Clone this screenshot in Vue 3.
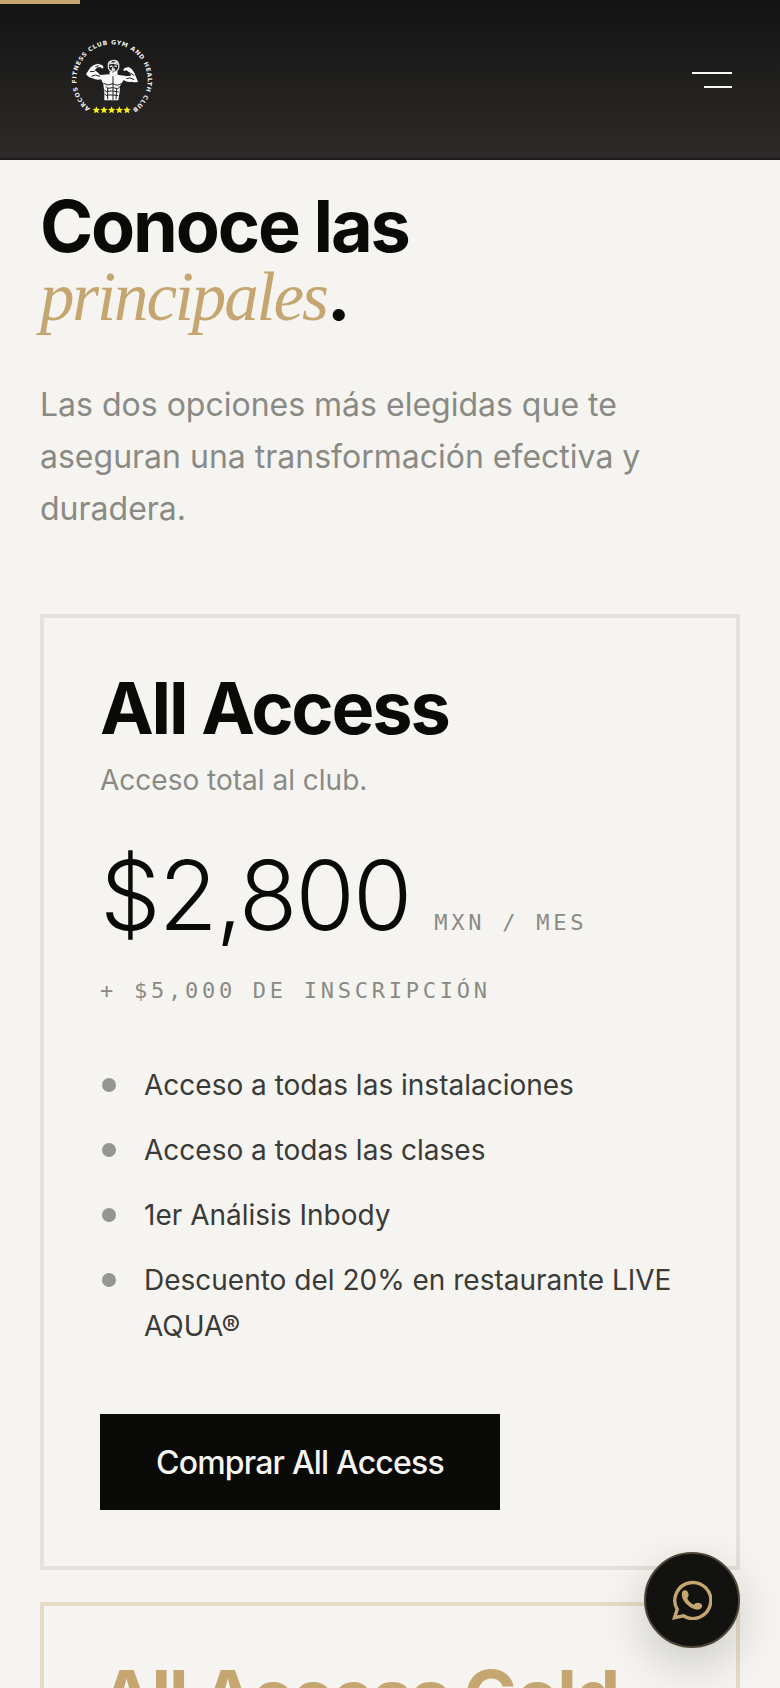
<script setup>
import { ref } from 'vue'

const menuOpen = ref(false)
const progress = ref(10.2)

const plans = [
	{
		id: 'all-access',
		name: 'All Access',
		tagline: 'Acceso total al club.',
		price: '$2,800',
		period: 'MXN / MES',
		signup: '+ $5,000 DE INSCRIPCIÓN',
		features: [
			'Acceso a todas las instalaciones',
			'Acceso a todas las clases',
			'1er Análisis Inbody',
			'Descuento del 20% en restaurante LIVE AQUA®'
		],
		cta: 'Comprar All Access'
	},
	{
		id: 'all-access-gold',
		name: 'All Access Gold',
		gold: true
	}
]
</script>

<template>
	<div class="page">
		<div class="progress" :style="{ width: progress + '%' }"></div>

		<header class="header">
			<a class="logo" href="#" aria-label="Arcos Fitness Club">
				<svg viewBox="0 0 240 240">
					<defs>
						<path id="ring" d="M55 205 A107 107 0 1 1 178 210" />
					</defs>
					<text class="ring-text"><textPath href="#ring">ARCOS FITNESS CLUB GYM AND HEALTH CLUB</textPath></text>

					<!-- Arms -->
					<path class="body" d="M42 102 L56 82 Q64 73 78 71 L91 76 Q97 82 92 86 L86 82 L76 82 L68 91 Q76 95 84 104 L94 106 L91 117 Q74 122 62 115 Q48 112 42 102 Z" />
					<path class="body" d="M198 125 L187 98 Q182 86 170 81 L158 84 Q152 89 155 93 L163 91 L174 98 L178 107 L166 108 L151 111 L154 120 Q168 129 179 125 Q190 129 198 125 Z" />
					<path class="line" d="M54 95 L68 94 M58 109 Q70 101 84 109 M70 80 L80 77 M176 99 L187 107 M163 116 Q174 110 187 119" />

					<!-- Head and neck -->
					<path class="sketch" d="M109 75 Q108 63 121 62 Q137 59 140 73 Q142 88 133 94 Q123 100 113 91 Q107 85 109 75 Z M110 72 Q121 67 138 73 M113 80 L121 78 M127 78 L135 79 M123 80 L121 87 L128 87 M119 91 L130 90 M114 68 L119 64 M127 69 L136 66" />
					<path class="body" d="M114 93 L122 98 L136 93 L137 104 L120 110 L112 103 Z" />

					<!-- Torso -->
					<path class="body" d="M86 105 L110 103 L123 109 L136 104 L163 108 L153 123 L144 139 L143 155 L139 181 L97 181 L97 157 L94 133 L87 117 Z" />
					<path class="line" d="M123 109 V180 M94 130 Q109 139 123 131 Q136 140 149 130 M101 139 L108 145 L122 143 L137 146 L145 139 M104 154 L122 153 L140 156 M105 165 L122 165 L139 167 M107 144 L107 178 M134 147 L132 178 M97 150 L106 157 M98 162 L106 168" />

					<!-- Stars -->
					<path v-for="n in 5" :key="n" class="star" :transform="`translate(${50 + n * 23} 210)`" d="M0 -11 L3 -4 L11 -3 L5 2 L7 10 L0 6 L-7 10 L-5 2 L-11 -3 L-3 -4 Z" />
				</svg>
			</a>

			<button class="burger" type="button" aria-label="Menú" :aria-expanded="menuOpen" @click="menuOpen = !menuOpen">
				<span></span>
				<span></span>
			</button>
		</header>

		<main class="content">
			<h1>Conoce las<br><em>principales</em>.</h1>
			<p class="intro">Las dos opciones más elegidas que te aseguran una transformación efectiva y duradera.</p>

			<div class="plans">
				<section v-for="plan in plans" :key="plan.id" class="card" :class="{ gold: plan.gold }">
					<h2>{{ plan.name }}</h2>
					<template v-if="plan.price">
						<p class="tagline">{{ plan.tagline }}</p>
						<div class="price">
							<span class="amount">{{ plan.price }}</span>
							<span class="mono">{{ plan.period }}</span>
						</div>
						<p class="mono signup">{{ plan.signup }}</p>
						<ul>
							<li v-for="feature in plan.features" :key="feature">
								<span class="dot"></span>
								<span>{{ feature }}</span>
							</li>
						</ul>
						<button class="buy" type="button">{{ plan.cta }}</button>
					</template>
				</section>
			</div>
		</main>

		<a class="whatsapp" href="#" aria-label="WhatsApp">
			<svg viewBox="0 0 40 40">
				<path class="bubble" d="M2.5 37.7 L5.2 29.4 A18 18 0 1 1 11.4 35.8 Z" />
				<path class="phone" d="M10 12.4 Q10.8 9.4 14 10.4 Q16.4 11.3 16.6 15 Q16.6 17 15.2 18.2 Q17 22.3 21.8 24.8 Q23.2 22.8 25.4 22.7 Q29.4 22.8 30.2 25.1 Q30.3 28.8 26.6 29.6 Q21.6 30.3 16 25.6 Q10 20.2 9.8 15 Z" />
			</svg>
		</a>
	</div>
</template>

<style>
body {
	background-color: #f5f4f0;
}
</style>

<style scoped>
.page {
	height: 100vh;
	overflow: hidden;
	background-color: #f5f4f0;
	color: #0a0a09;
	font-family: Inter, "Liberation Sans", sans-serif;
}

.progress {
	position: fixed;
	top: 0;
	left: 0;
	height: 4px;
	background-color: #c5a670;
	z-index: 3;
}

.header {
	box-sizing: border-box;
	height: 160px;
	padding: 0 48px 0 72px;
	display: flex;
	align-items: center;
	justify-content: space-between;
	background: linear-gradient(#131313, #2d2b29);
	box-shadow: inset 0 -2px #1b1919;
}

.logo,
.logo svg {
	display: block;
	width: 80px;
	height: 80px;
	overflow: visible;
}

.ring-text {
	font-family: "DejaVu Sans", sans-serif;
	font-size: 18px;
	font-weight: bold;
	letter-spacing: 2px;
	fill: #f0f0f0;
}

.body {
	fill: #fafafa;
}

.line {
	fill: none;
	stroke: #222;
	stroke-width: 3;
}

.sketch {
	fill: none;
	stroke: #dedede;
	stroke-width: 4;
}

.star {
	fill: #fbf51a;
}

.burger {
	width: 40px;
	padding: 0;
	display: flex;
	flex-direction: column;
	align-items: flex-end;
	gap: 12px;
	border: 0;
	background: none;
	cursor: pointer;
}

.burger span {
	width: 40px;
	height: 2px;
	background-color: #f5f5f3;
}

.burger span:last-child {
	width: 28px;
}

.content {
	padding: 32px 40px;
}

h1,
h2 {
	margin: 0;
	font-size: 72px;
	font-weight: 700;
	line-height: 68px;
	letter-spacing: -0.03em;
}

h1 em {
	color: #c5a670;
	font-family: "Liberation Serif", serif;
	font-size: 69px;
	font-weight: 400;
	font-style: italic;
}

.intro {
	margin: 48px 0 79px;
	max-width: 640px;
	color: #8a8a85;
	font-size: 32px;
	line-height: 52px;
}

.plans {
	display: flex;
	flex-direction: column;
	gap: 32px;
}

.card {
	padding: 56px;
	border: 4px solid #e2e1dc;
}

.card.gold {
	border-color: #e6dbc6;
}

.card.gold h2 {
	color: #c5a670;
}

.tagline {
	margin: 16px 0 45px;
	color: #8a8a85;
	font-size: 28px;
	line-height: 44px;
}

.price {
	display: flex;
	align-items: baseline;
	gap: 24px;
}

.amount {
	font-size: 96px;
	font-weight: 300;
	line-height: 96px;
	letter-spacing: -0.02em;
}

.mono {
	color: #8a8a85;
	font-family: "DejaVu Sans Mono", monospace;
	font-size: 22px;
	line-height: 32px;
	letter-spacing: 0.17em;
}

.signup {
	margin: 32px 0 55px;
}

ul {
	margin: 0;
	padding: 0;
	list-style: none;
	display: flex;
	flex-direction: column;
	gap: 19px;
}

li {
	display: flex;
	gap: 28px;
	color: #3a3a36;
	font-size: 28px;
	line-height: 46px;
}

.dot {
	flex: none;
	width: 14px;
	height: 14px;
	margin: 16px 0 0 2px;
	border-radius: 50%;
	background-color: #969691;
}

.buy {
	height: 96px;
	margin-top: 65px;
	padding: 0 56px;
	display: block;
	border: 0;
	background-color: #0a0a09;
	color: #f5f4f0;
	font-family: inherit;
	font-size: 32px;
	font-weight: 500;
	letter-spacing: -0.025em;
	cursor: pointer;
}

.whatsapp {
	position: fixed;
	right: 40px;
	bottom: 40px;
	box-sizing: border-box;
	width: 96px;
	height: 96px;
	display: flex;
	align-items: center;
	justify-content: center;
	border: 2px solid #4e4636;
	border-radius: 50%;
	background-color: #121210;
	box-shadow: 0 16px 48px rgba(0, 0, 0, 0.18);
}

.whatsapp svg {
	width: 40px;
	height: 40px;
}

.bubble {
	fill: none;
	stroke: #c5a670;
	stroke-width: 3.4;
}

.phone {
	fill: #c5a670;
}
</style>
